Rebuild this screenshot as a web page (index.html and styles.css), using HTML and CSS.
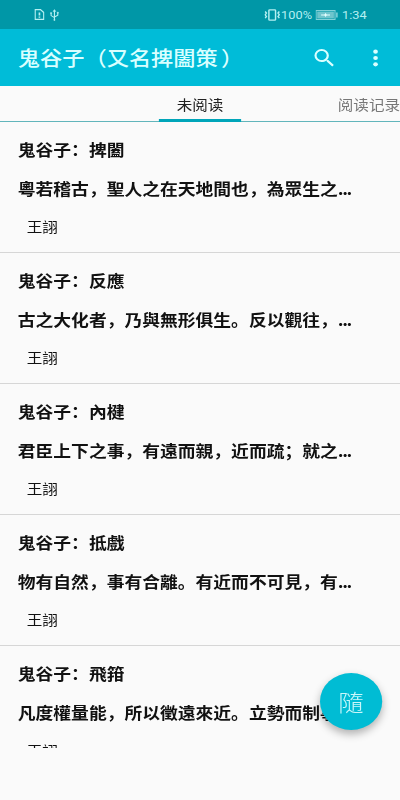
FILE: index.html
```html
<!DOCTYPE html>
<html lang="zh">
<head>
    <meta charset="UTF-8">
    <meta name="viewport" content="width=device-width, initial-scale=1.0">
    <title>鬼谷子（又名捭闔策）</title>
    <link rel="stylesheet" href="styles.css">
</head>
<body>
    <div class="app">
        <div class="status-bar">
            <svg class="sim" width="9" height="11" viewBox="0 0 9 11" fill="none" stroke="currentColor" stroke-width="1.2">
                <path d="M.6.6h4.8l3 3v6.8H.6z"/>
                <path d="M4.5 3.5v3M4.5 7.5v1.2" stroke-width="1.5"/>
            </svg>
            <svg class="usb" width="8" height="12" viewBox="0 0 8 12" fill="none" stroke="currentColor">
                <path d="M4 1v10M1 4v2.6l3 2M7 3.6v2.6L4 8"/>
                <path d="M2.8 2.4L4 .6l1.2 1.8zM.5 3.6h1v1h-1zM6.5 3.2h1v1h-1zM3.5 10.4h1v1h-1z" fill="currentColor" stroke-width=".5"/>
            </svg>
            <svg class="vibrate" width="14" height="12" viewBox="0 0 14 12" fill="none" stroke="currentColor" stroke-width="1.3">
                <rect x="4" y=".8" width="6" height="10.4" rx=".8"/>
                <path d="M.6 2.5l1.2 1.6L.6 5.8l1.2 1.6L.6 9.2M13.4 2.5l-1.2 1.6 1.2 1.7-1.2 1.6 1.2 1.8"/>
            </svg>
            <span class="percent">100%</span>
            <svg class="battery" width="20" height="10" viewBox="0 0 20 10">
                <rect x=".5" y=".5" width="17" height="9" fill="none" stroke="#82d1d8"/>
                <rect x="1.5" y="1.5" width="15" height="7" fill="#6fc5cd"/>
                <path d="M5 4.6h3l1-1.6 1 1.6h3v.8h-3L9 7 8 5.4H5z" fill="#e5ffff"/>
                <rect x="18.7" y="2.5" width="1.2" height="5" fill="#a8e6eb"/>
            </svg>
            <span class="clock">1:34</span>
        </div>

        <div class="toolbar">
            <h1>鬼谷子（又名捭闔策<span class="paren">）</span></h1>
            <svg class="search" width="24" height="24" viewBox="0 0 24 24" fill="currentColor">
                <path d="M15.5 14h-.79l-.28-.27A6.47 6.47 0 0 0 16 9.5 6.5 6.5 0 1 0 9.5 16c1.61 0 3.09-.59 4.23-1.57l.27.28v.79l5 4.99L20.49 19l-4.99-5zm-6 0C7.01 14 5 11.99 5 9.5S7.01 5 9.5 5 14 7.01 14 9.5 11.99 14 9.5 14z"/>
            </svg>
            <svg class="more" width="24" height="24" viewBox="0 0 24 24" fill="currentColor">
                <circle cx="12" cy="5.7" r="2.1"/>
                <circle cx="12" cy="12" r="2.1"/>
                <circle cx="12" cy="18.3" r="2.1"/>
            </svg>
        </div>

        <div class="tabs">
            <span></span>
            <span class="tab active">未阅读</span>
            <span class="tab next">阅读记录</span>
        </div>

        <div class="list">
            <div class="item">
                <h2>鬼谷子：捭闔</h2>
                <p class="excerpt">粵若稽古，聖人之在天地間也，為眾生之<span class="dots">...</span></p>
                <p class="author">王詡</p>
            </div>
            <div class="item">
                <h2>鬼谷子：反應</h2>
                <p class="excerpt">古之大化者，乃與無形俱生。反以觀往，<span class="dots">...</span></p>
                <p class="author">王詡</p>
            </div>
            <div class="item">
                <h2>鬼谷子：內楗</h2>
                <p class="excerpt">君臣上下之事，有遠而親，近而疏；就之<span class="dots">...</span></p>
                <p class="author">王詡</p>
            </div>
            <div class="item">
                <h2>鬼谷子：抵戲</h2>
                <p class="excerpt">物有自然，事有合離。有近而不可見，有<span class="dots">...</span></p>
                <p class="author">王詡</p>
            </div>
            <div class="item">
                <h2>鬼谷子：飛箝</h2>
                <p class="excerpt">凡度權量能，所以徵遠來近。立勢而制事<span class="dots">...</span></p>
                <p class="author">王詡</p>
            </div>
        </div>

        <button class="fab">隨</button>
    </div>
</body>
</html>
```

FILE: styles.css
```css
* {
    box-sizing: border-box;
}

body {
    margin: 0;
    overflow: hidden;
    background-color: #fafafa;
    font-family: "Noto Sans CJK SC", sans-serif;
}

.app {
    position: relative;
    width: 360px;
    height: 800px;
    transform: scaleX(1.1111);
    transform-origin: 0 0;
}

.status-bar {
    display: flex;
    align-items: center;
    height: 29px;
    padding: 0 30px 0 31px;
    background-color: #0097a7;
    color: #b5f0f2;
    font-family: Roboto, sans-serif;
    font-size: 12px;
}

.usb {
    margin-left: 5px;
}

.vibrate {
    margin-left: auto;
}

.percent {
    margin: 0 3px 0 1px;
    font-size: 11.5px;
}

.clock {
    margin-left: 4px;
    font-size: 11.5px;
}

.toolbar {
    display: flex;
    align-items: center;
    height: 57px;
    padding: 0 10px 0 16px;
    background-color: #00bcd8;
    color: #d9ffff;
}

.toolbar h1 {
    flex: 1;
    margin: 0;
    font-size: 20px;
    font-weight: 500;
    line-height: 57px;
    white-space: nowrap;
}

.paren {
    margin-left: 3px;
}

.more {
    margin-left: 22px;
}

.tabs {
    display: grid;
    grid-template-columns: 143px 74px 143px;
    height: 36px;
    border-bottom: 1px solid #62b5bb;
    font-size: 14px;
    line-height: 36px;
}

.tab {
    height: 36px;
    color: #777;
    white-space: nowrap;
}

.tab.active {
    border-bottom: 3px solid #00a5b9;
    color: #222;
    text-align: center;
}

.tab.next {
    padding-left: 87px;
}

.list {
    height: 626px;
    overflow: hidden;
}

.item {
    height: 131px;
    padding: 15px 16px 0;
    border-bottom: 1px solid #d6d6d6;
    color: #111;
}

.item h2,
.item p {
    margin: 0;
    white-space: nowrap;
}

.item h2,
.item .excerpt {
    font-size: 16px;
    font-weight: 700;
    line-height: 24px;
}

.item .excerpt {
    margin-top: 15px;
}

.dots {
    letter-spacing: -1.3px;
}

.item .author {
    margin-top: 15px;
    padding-left: 8px;
    font-size: 14px;
    line-height: 22px;
}

.fab {
    position: absolute;
    right: 16px;
    top: 673px;
    width: 56px;
    height: 57px;
    padding: 0 0 2px;
    border: none;
    border-radius: 50%;
    background-color: #00bcd4;
    box-shadow: 0 4px 8px rgba(0, 0, 0, 0.3);
    color: #c9f7fa;
    font-family: "Noto Sans CJK TC", sans-serif;
    font-size: 23px;
    font-weight: 300;
}
```
